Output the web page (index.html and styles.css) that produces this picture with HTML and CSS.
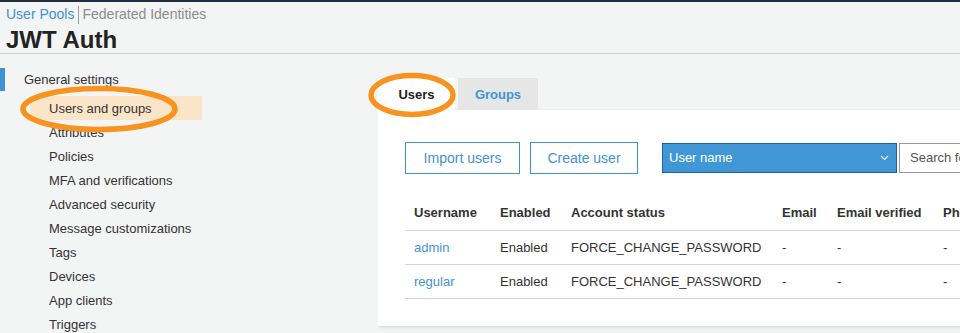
FILE: index.html
```html
<!DOCTYPE html>
<html>
<head>
<meta charset="utf-8">
<link rel="stylesheet" href="styles.css">
</head>
<body>
<div class="topline"></div>
<header class="header">
  <div class="crumbs"><a class="crumb-active">User Pools</a><span class="sep"></span><span class="crumb">Federated Identities</span></div>
  <h1 class="title">JWT Auth</h1>
</header>
<div class="layout">
  <nav class="sidebar">
    <div class="nav-group">General settings</div>
    <div class="nav-item nav-selected">Users and groups</div>
    <div class="nav-item">Attributes</div>
    <div class="nav-item">Policies</div>
    <div class="nav-item">MFA and verifications</div>
    <div class="nav-item">Advanced security</div>
    <div class="nav-item">Message customizations</div>
    <div class="nav-item">Tags</div>
    <div class="nav-item">Devices</div>
    <div class="nav-item">App clients</div>
    <div class="nav-item">Triggers</div>
  </nav>
  <main class="main">
    <div class="tabs">
      <div class="tab tab-active">Users</div>
      <div class="tab">Groups</div>
    </div>
    <section class="panel">
      <div class="toolbar">
        <button class="btn btn-import">Import users</button>
        <button class="btn btn-create">Create user</button>
        <div class="select">User name
          <svg class="chev" width="9" height="6" viewBox="0 0 9 6"><path d="M1 1 L4.5 4.5 L8 1" fill="none" stroke="#fff" stroke-width="1.1"/></svg>
        </div>
        <div class="search">Search for users</div>
      </div>
      <table class="users">
        <thead>
          <tr><th class="c1">Username</th><th class="c2">Enabled</th><th class="c3">Account status</th><th class="c4">Email</th><th class="c5">Email verified</th><th class="c6">Phone</th></tr>
        </thead>
        <tbody>
          <tr><td><a class="link">admin</a></td><td>Enabled</td><td>FORCE_CHANGE_PASSWORD</td><td>-</td><td>-</td><td>-</td></tr>
          <tr><td><a class="link">regular</a></td><td>Enabled</td><td>FORCE_CHANGE_PASSWORD</td><td>-</td><td>-</td><td>-</td></tr>
        </tbody>
      </table>
    </section>
  </main>
</div>
<svg class="ring ring-nav" width="166" height="50" viewBox="0 0 166 50"><ellipse cx="83" cy="25" rx="76" ry="20.5" fill="none" stroke="#f7931e" stroke-width="5.5"/></svg>
<svg class="ring ring-tab" width="92" height="48" viewBox="0 0 92 48"><ellipse cx="46" cy="24" rx="41" ry="19.5" fill="none" stroke="#f7931e" stroke-width="5.5"/></svg>
</body>
</html>
```
FILE: styles.css
```css
* { box-sizing: border-box; }
html, body { margin: 0; padding: 0; }
body {
  width: 960px;
  height: 333px;
  overflow: hidden;
  background: #f3f4f4;
  font-family: "Liberation Sans", Arial, sans-serif;
  color: #333;
  position: relative;
}
.topline { height: 2px; background: #232f3e; }
.header {
  padding: 4px 6px 0;
  border-bottom: 1px solid #cfd1d1;
  height: 52px;
}
.crumbs { display: flex; align-items: center; font-size: 14px; height: 17px; line-height: 17px; }
.crumb-active { color: #3f93d4; }
.sep { width: 1px; height: 18px; background: #999; margin: 0 3px 0 4px; }
.crumb { color: #8c8c8c; }
.title {
  margin: 3px 0 0;
  font-size: 24px;
  line-height: 28px;
  font-weight: bold;
  color: #222;
}
.layout { display: flex; }
.sidebar { width: 378px; flex-shrink: 0; padding-top: 14px; font-size: 13px; }
.nav-group {
  height: 23px;
  line-height: 23px;
  border-left: 5px solid #3f93d4;
  padding-left: 19px;
  color: #333;
}
.nav-item {
  height: 24px;
  line-height: 26px;
  padding-left: 49px;
  color: #333;
  width: 202px;
}
.nav-selected {
  background: linear-gradient(to right, transparent 30px, #fbe5c8 30px);
  margin-top: 5px;
}
.main { flex: 1; min-width: 0; overflow: hidden; padding-top: 24px; }
.tabs { display: flex; gap: 3px; height: 32px; }
.tab {
  width: 80px;
  height: 32px;
  line-height: 33px;
  text-align: center;
  font-size: 13px;
  font-weight: bold;
  background: #e6e6e6;
  color: #3f93d4;
}
.tab-active { width: 77px; background: #fff; color: #222; }
.panel {
  background: #fff;
  height: 216px;
  width: 700px;
  padding: 32px 0 0 27px;
  box-shadow: 0 1px 3px rgba(0,0,0,0.15);
}
.toolbar { display: flex; align-items: center; height: 32px; }
.btn {
  height: 32px;
  flex-shrink: 0;
  background: #fff;
  border: 1px solid #3f93d4;
  color: #3f93d4;
  font-family: "Liberation Sans", Arial, sans-serif;
  font-size: 14px;
  padding: 0;
}
.btn-import { width: 115px; margin-right: 10px; }
.btn-create { width: 108px; margin-right: 24px; }
.select {
  flex-shrink: 0;
  width: 235px;
  height: 30px;
  background: #4197d6;
  border: 1px solid #21609a;
  color: #fff;
  font-size: 13px;
  line-height: 28px;
  padding: 0 7px 0 6px;
  display: flex;
  align-items: center;
  justify-content: space-between;
}
.chev { display: block; }
.search {
  margin-left: 2px;
  width: 160px;
  height: 30px;
  border: 1px solid #9a9a9a;
  font-size: 13px;
  line-height: 28px;
  padding-left: 10px;
  color: #555;
  white-space: nowrap;
  overflow: hidden;
  flex-shrink: 0;
}
.users {
  margin-top: 22px;
  border-collapse: collapse;
  font-size: 13px;
  table-layout: fixed;
  width: 600px;
}
.users th, .users td {
  height: 34px;
  padding: 0 0 0 9px;
  text-align: left;
  border-bottom: 1px solid #d5d5d5;
  white-space: nowrap;
  overflow: hidden;
}
.users th { font-weight: bold; color: #333; }
.users td { color: #333; }
.c1 { width: 86px; }
.c2 { width: 71px; }
.c3 { width: 211px; }
.c4 { width: 55px; }
.c5 { width: 106px; }
.c6 { width: 71px; }
.link { color: #3f93d4; }
.ring { position: absolute; }
.ring-nav { left: 16px; top: 84px; }
.ring-tab { left: 366px; top: 71px; }
```
